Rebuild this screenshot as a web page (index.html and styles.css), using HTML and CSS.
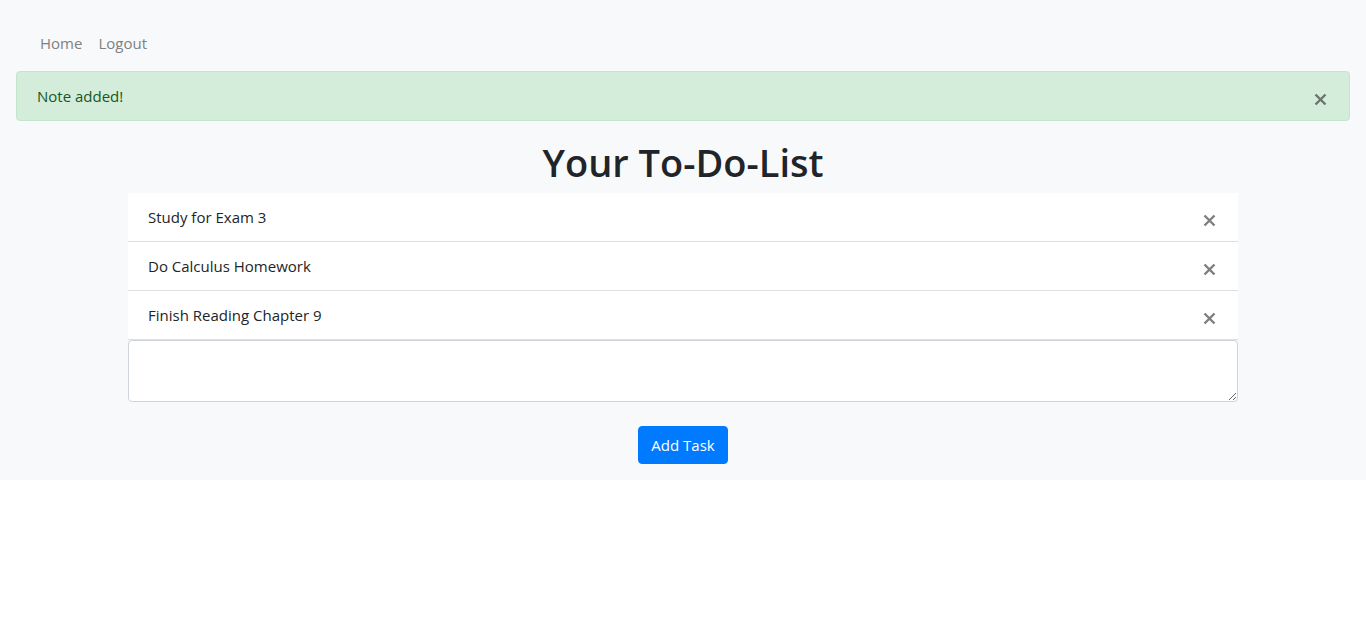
FILE: index.html
```html
<!DOCTYPE html>
<html lang="en">
<head>
<meta charset="utf-8">
<meta name="viewport" content="width=device-width, initial-scale=1">
<title>Your To-Do-List</title>
<link rel="stylesheet" href="styles.css">
</head>
<body>
<div class="page">
  <nav class="navbar">
    <a class="nav-link" href="#">Home</a>
    <a class="nav-link" href="#">Logout</a>
  </nav>
  <div class="alert" role="alert">
    <span>Note added!</span>
    <button class="close" type="button" aria-label="Dismiss">
      <svg class="cross" viewBox="0 0 13 13" aria-hidden="true"><path d="M1.5 1.5 11.5 11.5M11.5 1.5 1.5 11.5"/></svg>
    </button>
  </div>
  <main class="container">
    <h1 class="title">Your To-Do-List</h1>
    <ul class="tasks">
      <li class="task">Study for Exam 3
        <button class="close" type="button" aria-label="Delete task"><svg class="cross" viewBox="0 0 13 13" aria-hidden="true"><path d="M1.5 1.5 11.5 11.5M11.5 1.5 1.5 11.5"/></svg></button>
      </li>
      <li class="task">Do Calculus Homework
        <button class="close" type="button" aria-label="Delete task"><svg class="cross" viewBox="0 0 13 13" aria-hidden="true"><path d="M1.5 1.5 11.5 11.5M11.5 1.5 1.5 11.5"/></svg></button>
      </li>
      <li class="task">Finish Reading Chapter 9
        <button class="close" type="button" aria-label="Delete task"><svg class="cross" viewBox="0 0 13 13" aria-hidden="true"><path d="M1.5 1.5 11.5 11.5M11.5 1.5 1.5 11.5"/></svg></button>
      </li>
    </ul>
    <form class="form">
      <textarea class="note" rows="2" aria-label="New task"></textarea>
      <button class="add" type="button">Add Task</button>
    </form>
  </main>
</div>
</body>
</html>
```
FILE: styles.css
```css
* { box-sizing: border-box; }
body {
  margin: 0;
  background: #fff;
  color: #212529;
  font: 15px/24px "Segoe UI", "Open Sans", "Noto Sans", sans-serif;
}
.page { background: #f8f9fa; padding: 16px; }
.navbar { display: flex; padding: 7px 16px 8px; }
.nav-link { padding: 8px; color: #7f8080; text-decoration: none; }
.alert {
  display: flex;
  align-items: center;
  justify-content: space-between;
  padding: 12px 20px;
  border: 1px solid #c3e6cb;
  border-radius: 4px;
  background: #d4edda;
  color: #155724;
}
.close {
  display: flex;
  padding: 6px 2px 0;
  border: 0;
  background: none;
  color: #000;
  opacity: 0.5;
  cursor: pointer;
}
.cross { width: 13px; height: 13px; fill: none; stroke: currentColor; stroke-width: 2.4; }
.container { width: 100%; max-width: 1140px; margin: 17px auto 0; padding: 0 15px; }
.title { margin: 0 0 7px; font-size: 38px; line-height: 48px; font-weight: 600; text-align: center; }
.tasks { margin: 0; padding: 0; list-style: none; }
.task {
  display: flex;
  align-items: center;
  justify-content: space-between;
  padding: 12px 20px;
  border-bottom: 1px solid #dfdfdf;
  background: #fff;
  color: #212529;
}
.form { display: flex; flex-direction: column; align-items: center; gap: 24px; }
.note {
  width: 100%;
  padding: 6px 12px;
  border: 1px solid #ced4da;
  border-radius: 4px;
  background: #fff;
  font: inherit;
  resize: vertical;
}
.add {
  padding: 6px 12px;
  border: 1px solid #007bff;
  border-radius: 4px;
  background: #007bff;
  color: #fff;
  font: inherit;
  cursor: pointer;
}
```
